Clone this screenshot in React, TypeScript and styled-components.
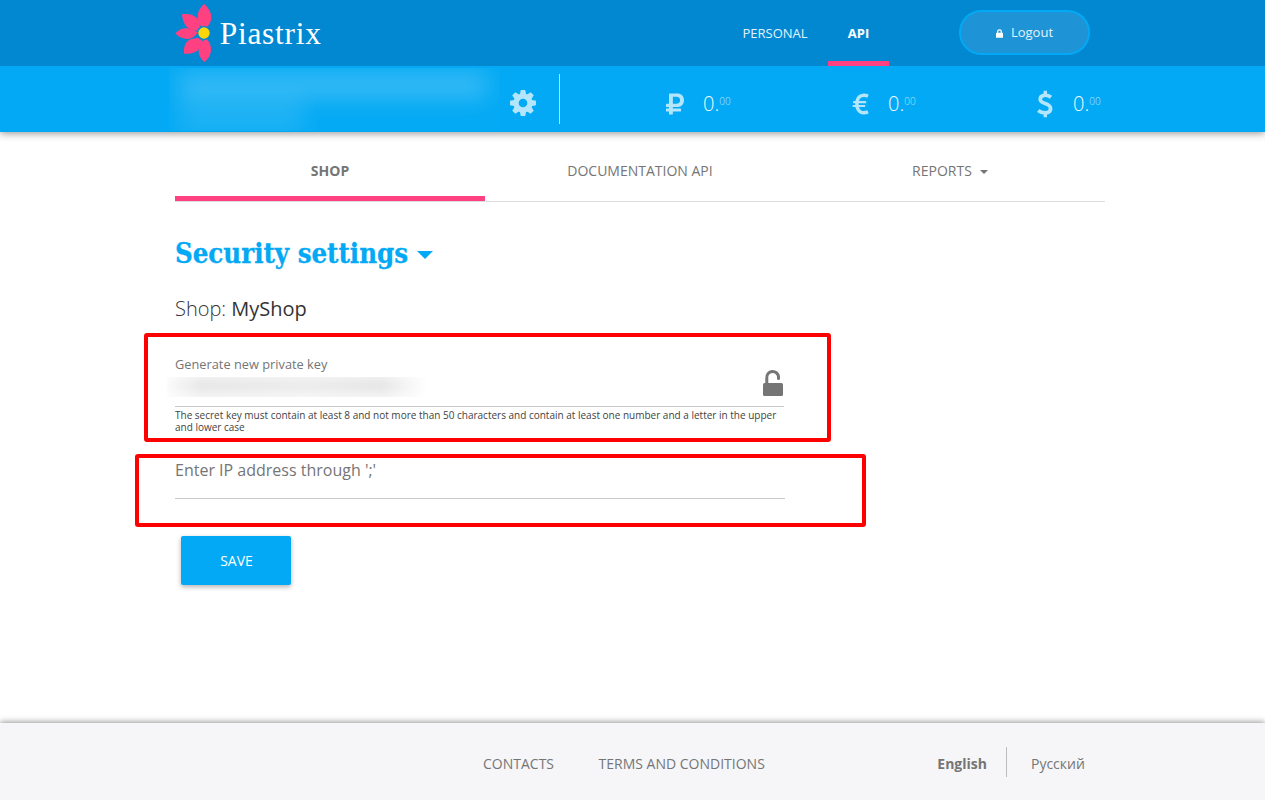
import React from "react";
import styled, { createGlobalStyle } from "styled-components";
import { FaRubleSign } from "react-icons/fa";

const Global = createGlobalStyle`
  *, *::before, *::after { box-sizing: border-box; }
  html, body { margin: 0; }
  body { background: #fff; color: #757575; font-family: "Open Sans", "Noto Sans", sans-serif; font-size: 14px; overflow: hidden; }
`;

const Page = styled.div`
  display: flex;
  flex-direction: column;
  height: 800px;
`;

const Container = styled.div`
  width: 930px;
  margin-left: 175px;
  display: flex;
`;

const Header = styled.header`
  position: relative;
  z-index: 1;
  background: #0288d1;
  height: 66px;
`;

const HeaderRow = styled(Container)`
  height: 66px;
`;

const Logo = styled.svg`
  display: block;
  width: 150px;
  height: 66px;
  flex: none;
`;

const MainNav = styled.nav`
  display: flex;
  margin-left: 397px;
`;

const NavLink = styled.a<{ $active?: boolean }>`
  height: 66px;
  width: ${(p) => (p.$active ? 61 : 106)}px;
  line-height: 67px;
  text-align: center;
  font-size: 13px;
  font-weight: ${(p) => (p.$active ? 700 : 400)};
  color: ${(p) => (p.$active ? "#fff" : "#e1f3fd")};
  border-bottom: ${(p) => (p.$active ? "5px solid #ff4081" : "0")};
`;

const LogoutButton = styled.button`
  display: flex;
  align-items: center;
  justify-content: center;
  gap: 8px;
  width: 131px;
  height: 45px;
  margin: 10px 0 0 70px;
  padding: 0 0 2px;
  border: 2px solid #03a9f4;
  border-radius: 23px;
  background: #1e94d7;
  color: #e4f3fb;
  font: 400 13px "Open Sans", sans-serif;
`;

const LockIcon = styled.svg`
  width: 7px;
  height: 9px;
  margin-top: 3px;
`;

const AccountBar = styled.section`
  height: 66px;
  background: #03a9f4;
  box-shadow: 0 1px 8px rgba(0, 0, 0, 0.45);
`;

const AccountRow = styled(Container)`
  height: 66px;
  color: #b3e5fc;
`;

const AccountName = styled.div`
  flex: none;
  width: 331px;
  height: 63px;
  margin: 2px 0 0 -6px;
  overflow: hidden;
  background: rgba(255, 255, 255, 0.012);
`;

const NameBlur = styled.div<{ $w: number; $h: number; $top: number; $alpha: number }>`
  width: ${(p) => p.$w}px;
  height: ${(p) => p.$h}px;
  margin: ${(p) => p.$top}px 0 0 10px;
  background: rgba(255, 255, 255, ${(p) => p.$alpha});
  filter: blur(11px);
`;

const Gear = styled.svg`
  flex: none;
  width: 26px;
  height: 26px;
  margin: 24px 23px 0 10px;
`;

const Divider = styled.div<{ $top: number; $h: number; $color: string }>`
  flex: none;
  width: 1px;
  height: ${(p) => p.$h}px;
  margin-top: ${(p) => p.$top}px;
  background: ${(p) => p.$color};
`;

const Balances = styled.div`
  display: flex;
  flex: none;
  margin-left: 103px;
`;

const Balance = styled.div`
  display: flex;
  flex: none;
  align-items: center;
  width: 185px;
  height: 75px;
`;

const CurrencyIcon = styled.span`
  display: flex;
  width: 24px;
  justify-content: center;
`;

const Amount = styled.span`
  display: flex;
  align-items: flex-start;
  margin: 1px 0 0 16px;
  font-size: 20px;
  font-weight: 300;
  line-height: 28px;
  color: #f0faff;
`;

const Cents = styled.span`
  font-size: 10px;
  line-height: 23px;
  color: #b3e5fc;
`;

const Content = styled.main`
  flex: 1;
  width: 930px;
  margin-left: 175px;
`;

const Tabs = styled.nav`
  display: flex;
  height: 70px;
  border-bottom: 1px solid #dedede;
`;

const Tab = styled.a<{ $active?: boolean }>`
  display: flex;
  flex: 1;
  align-items: center;
  justify-content: center;
  gap: 8px;
  height: 69px;
  padding-top: ${(p) => (p.$active ? 12 : 7)}px;
  font-weight: ${(p) => (p.$active ? 700 : 400)};
  border-bottom: ${(p) => (p.$active ? "5px solid #ff4081" : "0")};
`;

const Caret = styled.span<{ $size: number; $drop: number }>`
  margin-top: ${(p) => p.$drop}px;
  border: ${(p) => p.$size}px solid transparent;
  border-top-color: currentColor;
  border-bottom: 0;
`;

const Title = styled.h1`
  display: flex;
  align-items: center;
  gap: 2px;
  height: 44px;
  margin: 29px 0 0;
  color: #03a9f4;
`;

const TitleText = styled.svg`
  width: 240px;
  height: 44px;
  font: 700 27.5px "Roboto Slab", "DejaVu Serif Condensed", "DejaVu Serif", serif;
  fill: #03a9f4;
  stroke: #03a9f4;
  stroke-width: 0.3px;
`;

const ShopLine = styled.p`
  margin: 20px 0 0;
  height: 28px;
  line-height: 28px;
  font-size: 20px;
  font-weight: 300;
  color: #333;
`;

const ShopName = styled.span`
  font-weight: 400;
`;

const Highlight = styled.section<{ $left: number; $w: number; $h: number; $top: number; $pad: string }>`
  width: ${(p) => p.$w}px;
  height: ${(p) => p.$h}px;
  margin: ${(p) => p.$top}px 0 0 ${(p) => p.$left}px;
  padding: ${(p) => p.$pad};
  border: 4px solid #fe0000;
  border-radius: 3px;
`;

const Label = styled.label<{ $large?: boolean }>`
  display: block;
  font-size: ${(p) => (p.$large ? 16 : 12.8)}px;
  line-height: ${(p) => (p.$large ? 24 : 18)}px;
`;

const KeyRow = styled.div`
  display: flex;
  justify-content: space-between;
  width: 609px;
  height: 34px;
  border-bottom: 1px solid #c8c8c8;
`;

const KeyMask = styled.div`
  width: 260px;
  height: 20px;
  margin: 4px 0 0 -8px;
  background:
    linear-gradient(to bottom, rgba(255, 255, 255, 0.3), rgba(255, 255, 255, 0) 35%, rgba(255, 255, 255, 0) 55%, rgba(255, 255, 255, 0.5)),
    linear-gradient(to right, #fbfbfb 0, #f3f3f3 14px, #e9e9e9 34px, #ebebeb 90px, #ededed 140px, #e8e8e8 215px, #f5f5f5 240px, #fff 260px);
`;

const Unlock = styled.svg`
  width: 20px;
  height: 28px;
  margin: -4px 1px 0 0;
  fill: #757575;
`;

const Hint = styled.p`
  width: 610px;
  margin: 2px 0 0;
  font-size: 10px;
  line-height: 12px;
  color: #424242;
`;

const IpLine = styled.div`
  width: 610px;
  height: 17px;
  border-bottom: 1px solid #c8c8c8;
`;

const SaveButton = styled.button`
  display: block;
  width: 110px;
  height: 49px;
  margin: 9px 0 0 6px;
  padding: 0 0 0 1px;
  border: 0;
  border-radius: 2px;
  background: #03a9f4;
  box-shadow: 0 2px 5px rgba(0, 0, 0, 0.3);
  color: #fff;
  font: 400 14px "Open Sans", sans-serif;
`;

const Footer = styled.footer`
  height: 77px;
  background: #f6f6f9;
  box-shadow: 0 -1px 6px rgba(0, 0, 0, 0.42);
`;

const FooterRow = styled(Container)`
  height: 77px;
  line-height: 82px;
`;

const FooterLink = styled.a<{ $ml: number; $bold?: boolean }>`
  margin-left: ${(p) => p.$ml}px;
  font-weight: ${(p) => (p.$bold ? 700 : 400)};
  white-space: nowrap;
`;

const LanguageSwitch = styled.div`
  display: flex;
  gap: 19px;
  margin-left: 172.5px;
`;

const EuroIcon = () => (
  <svg width="17" height="22" viewBox="0 0 17 22" fill="none" stroke="#b3e5fc">
    <path d="M16 3.1C9.5 .4 4.9 4 4.9 11S9.5 21.6 16 18.9" strokeWidth="3.5" />
    <path d="M1.2 9.1H14.2M.7 13H13.2" strokeWidth="2.2" />
  </svg>
);

const DollarIcon = () => (
  <svg width="16" height="28" viewBox="0 0 16 28" fill="none" stroke="#b3e5fc">
    <path d="M14 7.2C10 4.2 3.2 4.6 3.2 9.2C3.200 14.300 13.600 12.700 13.600 18.500C13.600 23.700 6 24.300 1.200 20.500" strokeWidth="3.7" />
    <path d="M8.300 .8V5.500M8.300 22.500V27.300" strokeWidth="3.400" />
  </svg>
);

const balances = [
  { id: "rub", icon: <FaRubleSign size={24} /> },
  { id: "eur", icon: <EuroIcon /> },
  { id: "usd", icon: <DollarIcon /> },
];

export default function App() {
  return (
    <Page>
      <Global />
      <Header>
        <HeaderRow>
          <Logo viewBox="45 0 450 198">
            <g fill="#ff4081">
              <path d="M133 12C146 24 154 38 154 51C154 63 149 73 142 80Q133 76 124 80C116 70 112 60 113 48C114 34 122 20 133 12Z" />
              <path d="M66 43C82 40 98 43 108 52C116 60 119 70 120 81Q114 85 112 92C95 91 80 84 74 72C68 62 67 52 66 43Z" />
              <path d="M46 100C56 88 70 83 84 85C96 87 106 91 113 98C104 111 92 117 80 117C66 116 54 110 46 100Z" />
              <path d="M72 161C71 145 73 132 84 122C92 116 102 115 114 113Q118 119 126 120C126 135 118 150 106 156C96 161 84 162 72 161Z" />
              <path d="M133 186C121 176 115 164 116 150C117 140 121 130 130 121Q136 121 141 118C149 128 154 138 153 150C152 166 144 178 133 186Z" />
            </g>
            <circle cx="132" cy="99" r="17" fill="#ffd60a" />
            <text x="179" y="133" fontFamily="Liberation Serif, serif" fontSize="94" fill="#fff" textLength="304" lengthAdjust="spacing">Piastrix</text>
          </Logo>
          <MainNav>
            <NavLink>PERSONAL</NavLink>
            <NavLink $active>API</NavLink>
          </MainNav>
          <LogoutButton>
            <LockIcon viewBox="0 0 7 9">
              <path d="M1.7 4V2.7a1.8 1.8 0 0 1 3.6 0V4" fill="none" stroke="#fff" strokeWidth="1.3" />
              <rect y="3.8" width="7" height="5" rx=".6" fill="#fff" />
            </LockIcon>
            Logout
          </LogoutButton>
        </HeaderRow>
      </Header>
      <AccountBar>
        <AccountRow>
          <AccountName>
            <NameBlur $w={308} $h={25} $top={5} $alpha={0.2} />
            <NameBlur $w={125} $h={36} $top={0} $alpha={0.1} />
          </AccountName>
          <Gear viewBox="-13 -13 26 26">
            <g fill="#b3e5fc">
              {[0, 45, 90, 135].map((a) => (
                <path key={a} transform={`rotate(${a})`} d="M-2.2 -13H2.2L3.3 -8V8L2.2 13H-2.2L-3.3 8V-8Z" />
              ))}
              <circle r="9.6" />
            </g>
            <circle r="4.3" fill="#03a9f4" />
          </Gear>
          <Divider $top={8} $h={50} $color="#b3e5fc" />
          <Balances>
            {balances.map((b) => (
              <Balance key={b.id}>
                <CurrencyIcon>{b.icon}</CurrencyIcon>
                <Amount>
                  0.<Cents>00</Cents>
                </Amount>
              </Balance>
            ))}
          </Balances>
        </AccountRow>
      </AccountBar>
      <Content>
        <Tabs>
          <Tab $active>SHOP</Tab>
          <Tab>DOCUMENTATION API</Tab>
          <Tab>
            REPORTS <Caret $size={4} $drop={3} />
          </Tab>
        </Tabs>
        <Title>
          <TitleText>
            <text x="0" y="32" textLength="233" lengthAdjust="spacingAndGlyphs">Security settings</text>
          </TitleText>
          <Caret $size={8} $drop={4} />
        </Title>
        <ShopLine>
          Shop: <ShopName>MyShop</ShopName>
        </ShopLine>
        <Highlight $left={-31} $w={687} $h={109} $top={10} $pad="18px 0 0 27px">
          <Label>Generate new private key</Label>
          <KeyRow>
            <KeyMask />
            <Unlock viewBox="0 0 20 28">
              <path d="M3.8 16V8.9a5.700 5.700 0 0 1 11.700-1.200V9.500" fill="none" stroke="#757575" strokeWidth="3" strokeLinecap="round" />
              <rect y="14" width="20" height="13" rx="1.5" />
            </Unlock>
          </KeyRow>
          <Hint>
            The secret key must contain at least 8 and not more than 50 characters and contain at least one number and a
            letter in the upper and lower case
          </Hint>
        </Highlight>
        <Highlight $left={-40} $w={731} $h={73} $top={12} $pad="0 0 0 36px">
          <Label $large>Enter IP address through ';'</Label>
          <IpLine />
        </Highlight>
        <SaveButton>SAVE</SaveButton>
      </Content>
      <Footer>
        <FooterRow>
          <FooterLink $ml={308}>CONTACTS</FooterLink>
          <FooterLink $ml={44.5}>TERMS AND CONDITIONS</FooterLink>
          <LanguageSwitch>
            <FooterLink $ml={0} $bold>English</FooterLink>
            <Divider $top={24} $h={30} $color="#bdbdbd" />
            <FooterLink $ml={5}>Русский</FooterLink>
          </LanguageSwitch>
        </FooterRow>
      </Footer>
    </Page>
  );
}
